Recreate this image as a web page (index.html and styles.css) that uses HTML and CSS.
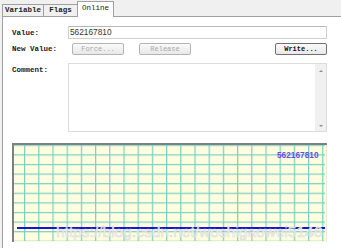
FILE: index.html
```html
<!DOCTYPE html>
<html lang="en">
<head>
    <meta charset="UTF-8">
    <meta name="viewport" content="width=device-width, initial-scale=1.0">
    <title>Online</title>
    <link rel="stylesheet" href="styles.css">
</head>
<body>
    <div class="tabs">
        <div class="tab tab-wide">Variable</div>
        <div class="tab">Flags</div>
        <div class="tab active">Online</div>
    </div>

    <div class="panel">
        <div class="form">
            <label class="label">Value:</label>
            <div class="value-box">562167810</div>

            <label class="label">New Value:</label>
            <div class="buttons">
                <button class="btn btn-force" disabled>Force...</button>
                <button class="btn btn-release" disabled>Release</button>
                <button class="btn btn-write">Write...</button>
            </div>

            <label class="label label-top">Comment:</label>
            <div class="comment">
                <div class="comment-text"></div>
                <div class="scrollbar">
                    <span class="arrow arrow-up"></span>
                    <span class="arrow arrow-down"></span>
                </div>
            </div>
        </div>

        <div class="chart">
            <svg width="315" height="99" viewBox="0 0 315 99">
                <defs>
                    <pattern id="grid" patternUnits="userSpaceOnUse" x="12" y="11.3" width="14.2" height="9.6">
                        <line x1="0.6" y1="0" x2="0.6" y2="9.6" stroke="#7ccfc6" stroke-width="1.3"/>
                        <line x1="0" y1="0.6" x2="14.2" y2="0.6" stroke="#7ccfc6" stroke-width="1.3"/>
                    </pattern>
                </defs>
                <rect x="0" y="0" width="315" height="99" fill="#ffffe0"/>
                <rect x="2" y="2" width="311" height="96" fill="url(#grid)"/>
                <rect x="0" y="0" width="315" height="2" fill="#808080"/>
                <rect x="0" y="0" width="2" height="99" fill="#808080"/>
                <rect x="314" y="2" width="1" height="97" fill="#e8e8e0"/>
                <line x1="5" y1="85" x2="313" y2="85" stroke="#1c10e0" stroke-width="2"/>
                <text class="chart-value" x="265" y="15">562167810</text>
                <text class="watermark" x="44" y="94">https://blog.csdn.net/woshigaowei5146</text>
            </svg>
        </div>
    </div>
</body>
</html>
```
FILE: styles.css
```css
body {
    margin: 0;
    background-color: #f0f0f0;
    font-family: 'Liberation Mono', monospace;
    font-size: 7.5px;
    font-weight: bold;
    color: #222;
}

.tabs {
    display: flex;
    align-items: flex-end;
    height: 16px;
    padding-left: 2px;
}

.tab {
    box-sizing: border-box;
    height: 12px;
    min-width: 35px;
    padding: 0 2px;
    line-height: 11px;
    text-align: center;
    background-color: #f0f0f0;
    border: 1px solid #a0a0a0;
    border-bottom: none;
    margin-right: -1px;
}

.tab.active {
    position: relative;
    height: 16px;
    min-width: 37px;
    margin-bottom: -1px;
    line-height: 13px;
    background-color: #fff;
    font-weight: normal;
}

.panel {
    margin-left: 2px;
    height: 232px;
    box-sizing: border-box;
    padding: 9px 14px 0 9px;
    background-color: #fff;
    border-top: 1px solid #a0a0a0;
    border-left: 1px solid #a0a0a0;
}

.form {
    display: grid;
    grid-template-columns: 56px 1fr;
    row-gap: 4px;
    align-items: center;
}

.label {
    display: block;
}

.label-top {
    align-self: start;
    padding-top: 3px;
    margin-top: 4px;
}

.value-box {
    box-sizing: border-box;
    height: 13px;
    padding-left: 1px;
    line-height: 11px;
    border: 1px solid #d0d0d0;
    border-top-color: #b8b8b8;
    font-family: 'Liberation Sans', sans-serif;
    font-size: 8.3px;
    font-weight: normal;
    color: #333;
}

.buttons {
    display: flex;
    height: 12px;
}

.btn {
    box-sizing: border-box;
    width: 52px;
    height: 12px;
    padding: 0;
    font-family: 'Liberation Mono', monospace;
    font-size: 7px;
    line-height: 10px;
    background: linear-gradient(#fafafa, #e8e8e8);
    border: 1px solid #b4b4b4;
    border-radius: 2px;
    color: #a8a8a8;
    font-weight: normal;
}

.btn-force {
    margin-left: 4px;
}

.btn-release {
    margin-left: 15px;
}

.btn-write {
    margin-left: auto;
    color: #111;
    font-weight: bold;
    border-color: #707070;
}

.comment {
    display: flex;
    height: 69px;
    margin-top: 4px;
    box-sizing: border-box;
    border: 1px solid #dcdcdc;
}

.comment-text {
    flex: 1;
}

.scrollbar {
    width: 11px;
    background-color: #f0f0f0;
    display: flex;
    flex-direction: column;
    justify-content: space-between;
    align-items: center;
    padding: 6px 0 4px;
}

.arrow {
    width: 0;
    height: 0;
    border-left: 2px solid transparent;
    border-right: 2px solid transparent;
}

.arrow-up {
    border-bottom: 2px solid #909090;
}

.arrow-down {
    border-top: 2px solid #909090;
}

.chart {
    margin-top: 11px;
    height: 99px;
}

.chart svg {
    display: block;
}

.chart-value {
    font-family: 'Liberation Sans', sans-serif;
    font-size: 8.3px;
    font-weight: bold;
    fill: #6a4ce6;
}

.watermark {
    font-family: 'Liberation Sans', sans-serif;
    font-size: 15.5px;
    font-weight: normal;
    fill: #ffffff;
    fill-opacity: 0.85;
    stroke: #d8d8d8;
    stroke-width: 0.6;
}
```
